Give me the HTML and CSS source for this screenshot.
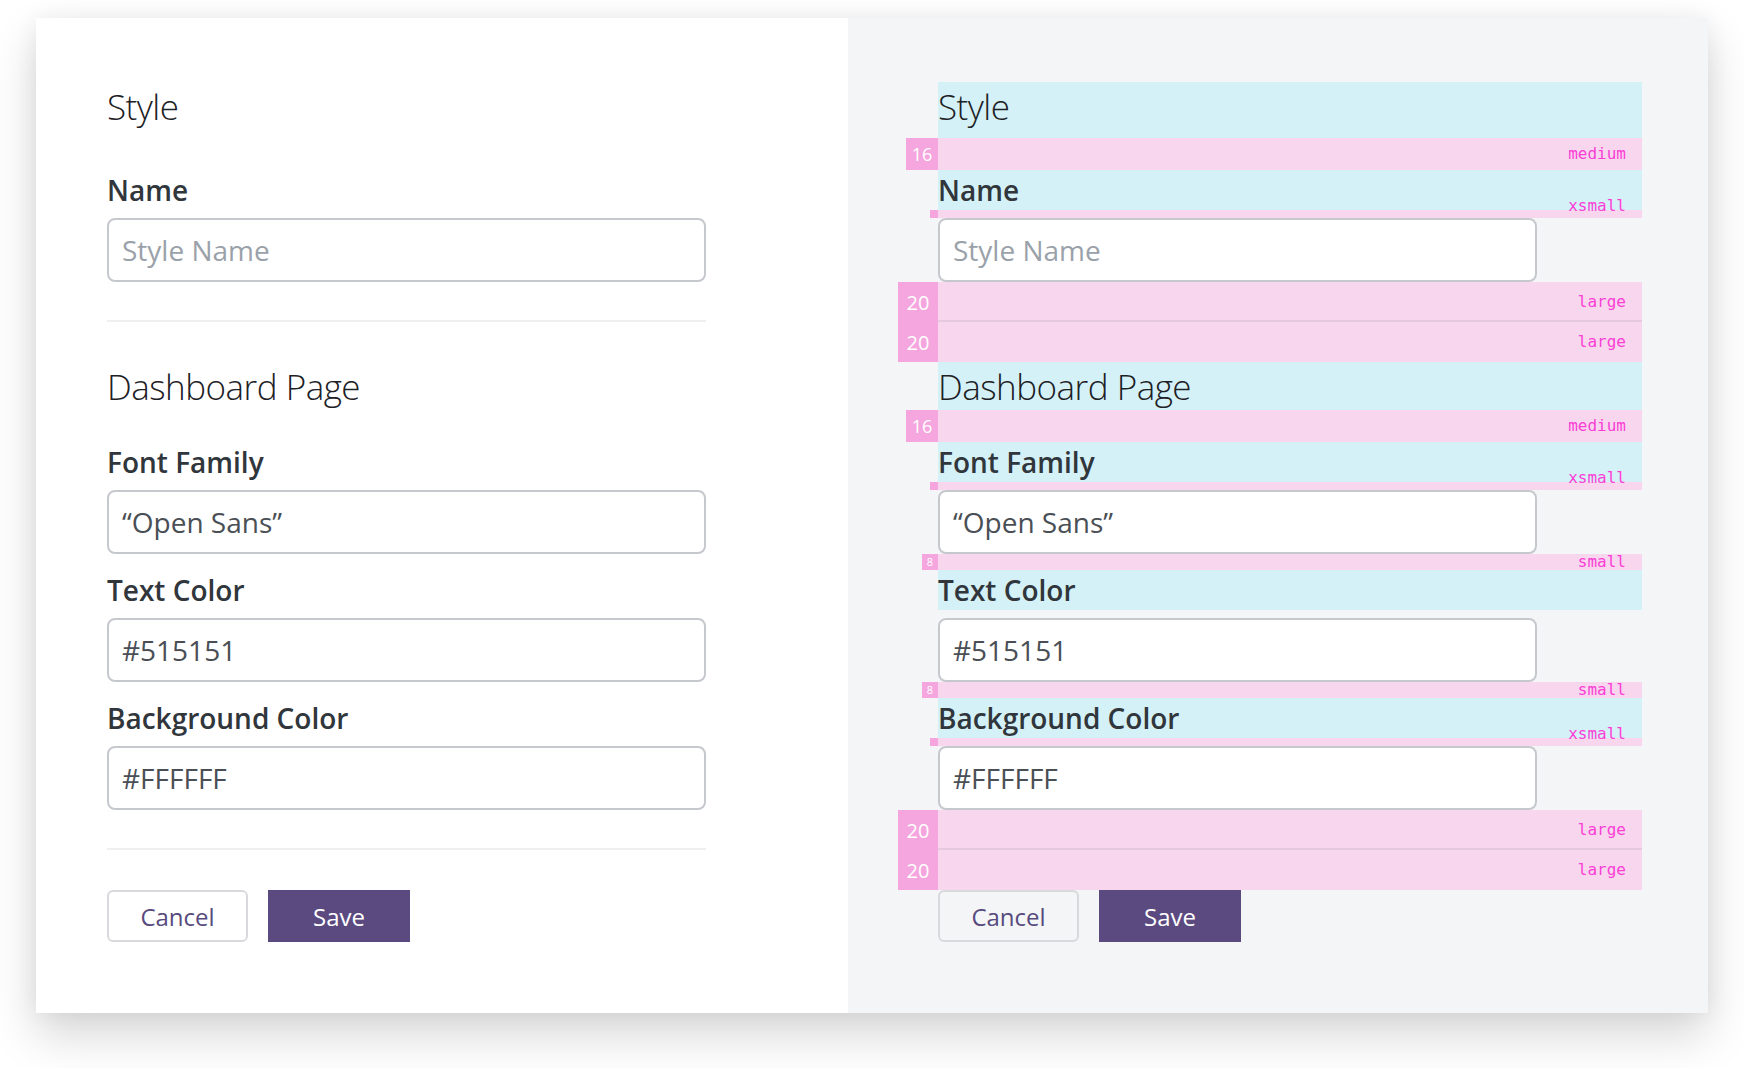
FILE: index.html
```html
<!DOCTYPE html>
<html lang="en">
<head>
<meta charset="utf-8">
<title>Style form</title>
<link rel="stylesheet" href="styles.css">
</head>
<body>
<div class="stage">
  <div class="card">
    <section class="panel panel-plain">
      <div class="form">
        <h1 class="title title-first">Style</h1>
        <div class="sp sp-md"></div>
        <label class="label">Name</label>
        <div class="sp sp-xs"></div>
        <input class="field" type="text" placeholder="Style Name">
        <div class="sp sp-lg"></div>
        <div class="rule"></div>
        <div class="sp sp-lg"></div>
        <h2 class="title">Dashboard Page</h2>
        <div class="sp sp-md"></div>
        <label class="label">Font Family</label>
        <div class="sp sp-xs"></div>
        <input class="field" type="text" value="“Open Sans”">
        <div class="sp sp-sm"></div>
        <label class="label">Text Color</label>
        <div class="sp sp-xs"></div>
        <input class="field" type="text" value="#515151">
        <div class="sp sp-sm"></div>
        <label class="label">Background Color</label>
        <div class="sp sp-xs"></div>
        <input class="field" type="text" value="#FFFFFF">
        <div class="sp sp-lg"></div>
        <div class="rule"></div>
        <div class="sp sp-lg"></div>
        <div class="actions">
          <button class="btn btn-cancel" type="button">Cancel</button>
          <button class="btn btn-save" type="button">Save</button>
        </div>
      </div>
    </section>

    <section class="panel panel-annotated">
      <div class="form form-wide">
        <h1 class="title title-first hl">Style</h1>
        <div class="mk mk-md"><span class="num">16</span><span class="fill"><span class="tag">medium</span></span></div>
        <label class="label hl">Name</label>
        <div class="mk mk-xs"><span class="num"></span><span class="fill"><span class="tag">xsmall</span></span></div>
        <input class="field" type="text" placeholder="Style Name">
        <div class="mk mk-lg"><span class="num">20</span><span class="fill"><span class="tag">large</span></span></div>
        <div class="rule"></div>
        <div class="mk mk-lg"><span class="num">20</span><span class="fill"><span class="tag">large</span></span></div>
        <h2 class="title hl">Dashboard Page</h2>
        <div class="mk mk-md"><span class="num">16</span><span class="fill"><span class="tag">medium</span></span></div>
        <label class="label hl">Font Family</label>
        <div class="mk mk-xs"><span class="num"></span><span class="fill"><span class="tag">xsmall</span></span></div>
        <input class="field" type="text" value="“Open Sans”">
        <div class="mk mk-sm"><span class="num">8</span><span class="fill"><span class="tag">small</span></span></div>
        <label class="label hl">Text Color</label>
        <div class="sp sp-xs"></div>
        <input class="field" type="text" value="#515151">
        <div class="mk mk-sm"><span class="num">8</span><span class="fill"><span class="tag">small</span></span></div>
        <label class="label hl">Background Color</label>
        <div class="mk mk-xs"><span class="num"></span><span class="fill"><span class="tag">xsmall</span></span></div>
        <input class="field" type="text" value="#FFFFFF">
        <div class="mk mk-lg"><span class="num">20</span><span class="fill"><span class="tag">large</span></span></div>
        <div class="rule"></div>
        <div class="mk mk-lg"><span class="num">20</span><span class="fill"><span class="tag">large</span></span></div>
        <div class="actions">
          <button class="btn btn-cancel" type="button">Cancel</button>
          <button class="btn btn-save" type="button">Save</button>
        </div>
      </div>
    </section>
  </div>
</div>
</body>
</html>
```

FILE: styles.css
```css
* { box-sizing: border-box; }

html, body {
  margin: 0;
  padding: 0;
  background: #ffffff;
}

body {
  font-family: "Open Sans", "Noto Sans", "Liberation Sans", sans-serif;
  color: #30363b;
  min-height: 1068px;
}

.stage {
  padding: 18px 36px 0 36px;
}

.card {
  display: grid;
  grid-template-columns: 812px 1fr;
  height: 995px;
  background: #ffffff;
  box-shadow: 0 22px 44px rgba(0, 0, 0, 0.16), 0 0 22px rgba(0, 0, 0, 0.06);
}

.panel {
  padding-top: 64px;
}

.panel-plain {
  background: #ffffff;
  padding-left: 71px;
}

.panel-annotated {
  background: #f4f5f7;
  padding-left: 90px;
}

.form {
  width: 599px;
  display: flex;
  flex-direction: column;
}

.form-wide {
  width: 704px;
}

.title {
  margin: 0;
  font-weight: 300;
  font-size: 35px;
  line-height: 50px;
  height: 48px;
  color: #1d2125;
  letter-spacing: -0.5px;
}

.title-first {
  height: 56px;
  padding-bottom: 8px;
}

.label {
  display: block;
  font-weight: 600;
  font-size: 28px;
  line-height: 40px;
  height: 40px;
  color: #30363b;
}

.hl {
  background: #d4f1f7;
}

.field {
  display: block;
  width: 599px;
  height: 64px;
  margin: 0;
  padding: 0 13px;
  border: 2px solid #c5c8cd;
  border-radius: 8px;
  background: #ffffff;
  font-family: "Open Sans", "Noto Sans", sans-serif;
  font-size: 28px;
  font-weight: 400;
  color: #4a4f55;
  outline: none;
}

.field::placeholder {
  color: #9aa1a9;
  opacity: 1;
}

.sp-xs { height: 8px; }
.sp-sm { height: 16px; }
.sp-md { height: 32px; }
.sp-lg { height: 40px; }

.rule {
  position: relative;
  height: 2px;
  margin-top: -2px;
  background: rgba(40, 50, 70, 0.08);
}

/* spacing markers */
.mk {
  display: flex;
  flex: none;
}

.mk .num {
  flex: none;
  display: flex;
  align-items: center;
  justify-content: center;
  background: #f5a6de;
  color: #ffffff;
  font-family: "Open Sans", "Noto Sans", sans-serif;
  font-weight: 400;
}

.mk .fill {
  flex: 1;
  display: flex;
  align-items: center;
  justify-content: flex-end;
  padding-right: 16px;
  background: #f7d6ee;
}

.mk .tag {
  font-family: "DejaVu Sans Mono", "Liberation Mono", monospace;
  font-size: 16px;
  line-height: 16px;
  height: 16px;
  color: #fb3fd6;
  white-space: nowrap;
}

.mk-xs { height: 8px; margin-left: -8px; }
.mk-xs .num { width: 8px; }
.mk-xs .tag { align-self: flex-end; margin-bottom: 4px; }

.mk-sm { height: 16px; margin-left: -16px; }
.mk-sm .num { width: 16px; font-size: 11px; line-height: 16px; }

.mk-md { height: 32px; margin-left: -32px; }
.mk-md .num { width: 32px; font-size: 18px; }

.mk-lg { height: 40px; margin-left: -40px; }
.mk-lg .num { width: 40px; font-size: 20px; }

/* buttons */
.actions {
  display: flex;
  gap: 20px;
}

.btn {
  height: 52px;
  margin: 0;
  padding: 0;
  font-family: "Open Sans", "Noto Sans", sans-serif;
  font-size: 24px;
  font-weight: 400;
  cursor: pointer;
}

.btn-cancel {
  width: 141px;
  background: transparent;
  border: 2px solid #d7d9dc;
  border-radius: 6px;
  color: #574a7d;
}

.btn-save {
  width: 142px;
  background: #5b4a80;
  border: none;
  border-radius: 0;
  color: #ffffff;
}
```
